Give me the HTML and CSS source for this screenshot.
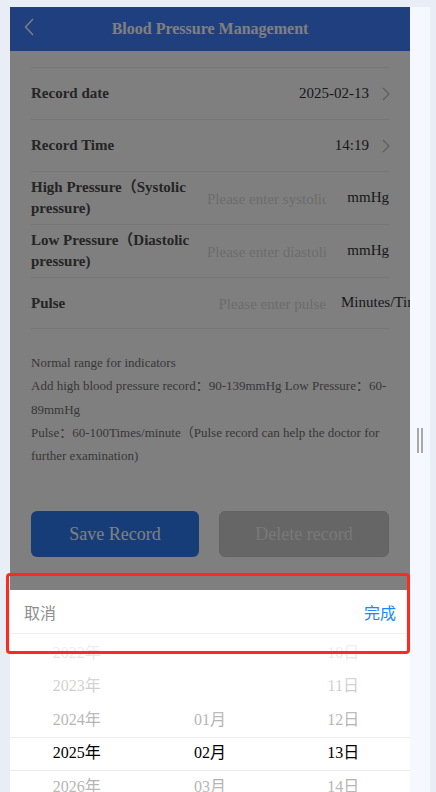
FILE: index.html
```html
<!DOCTYPE html>
<html lang="en">
<head>
<meta charset="utf-8">
<title>Blood Pressure Management</title>
<link rel="stylesheet" href="styles.css">
</head>
<body>
<div class="stage">
  <div class="phone">
    <header class="nav">
      <svg class="back" width="10" height="18" viewBox="0 0 10 18"><path d="M9 1 L1.5 9 L9 17" fill="none" stroke="#fff" stroke-width="1.4"/></svg>
      <h1 class="title">Blood Pressure Management</h1>
    </header>
    <main class="content">
      <div class="list">
        <div class="row">
          <div class="label">Record date</div>
          <div class="value">2025-02-13</div>
          <svg class="chev" width="8" height="14" viewBox="0 0 8 14"><path d="M1 1 L7 7 L1 13" fill="none" stroke="#bbb" stroke-width="1.2"/></svg>
        </div>
        <div class="row">
          <div class="label">Record Time</div>
          <div class="value">14:19</div>
          <svg class="chev" width="8" height="14" viewBox="0 0 8 14"><path d="M1 1 L7 7 L1 13" fill="none" stroke="#bbb" stroke-width="1.2"/></svg>
        </div>
        <div class="row">
          <div class="label">High Pressure（Systolic pressure)</div>
          <div class="input">Please enter systolic</div>
          <div class="unit">mmHg</div>
        </div>
        <div class="row">
          <div class="label">Low Pressure（Diastolic pressure)</div>
          <div class="input">Please enter diastolic</div>
          <div class="unit">mmHg</div>
        </div>
        <div class="row">
          <div class="label">Pulse</div>
          <div class="input">Please enter pulse</div>
          <div class="unit">Minutes/Times</div>
        </div>
      </div>
      <div class="notes">
        <p>Normal range for indicators</p>
        <p>Add high blood pressure record：90-139mmHg Low Pressure：60-89mmHg</p>
        <p>Pulse：60-100Times/minute（Pulse record can help the doctor for further examination)</p>
      </div>
      <div class="actions">
        <button class="btn save">Save Record</button>
        <button class="btn del">Delete record</button>
      </div>
    </main>
    <div class="mask"></div>
    <div class="picker">
      <div class="toolbar">
        <span class="cancel">取消</span>
        <span class="confirm">完成</span>
      </div>
      <div class="wheel">
        <div class="col">
          <div class="item">2022年</div>
          <div class="item">2023年</div>
          <div class="item">2024年</div>
          <div class="item sel">2025年</div>
          <div class="item">2026年</div>
          <div class="item">2027年</div>
          <div class="item">2028年</div>
        </div>
        <div class="col">
          <div class="item"></div>
          <div class="item"></div>
          <div class="item">01月</div>
          <div class="item sel">02月</div>
          <div class="item">03月</div>
          <div class="item">04月</div>
          <div class="item">05月</div>
        </div>
        <div class="col">
          <div class="item">10日</div>
          <div class="item">11日</div>
          <div class="item">12日</div>
          <div class="item sel">13日</div>
          <div class="item">14日</div>
          <div class="item">15日</div>
          <div class="item">16日</div>
        </div>
        <div class="fade fade-top"></div>
        <div class="band"></div>
        <div class="fade fade-bottom"></div>
      </div>
    </div>
  </div>
  <div class="side"><div class="handle"></div></div>
  <div class="annot"></div>
</div>
</body>
</html>
```
FILE: styles.css
```css
* { box-sizing: border-box; }
html, body { margin: 0; padding: 0; }
body {
  background: #e9eef6;
  font-family: "Liberation Serif", "Noto Sans CJK SC", serif;
  overflow: hidden;
}
.stage {
  position: relative;
  display: flex;
  padding: 7px 0 0 10px;
  height: 792px;
}
.phone {
  position: relative;
  width: 400px;
  height: 785px;
  overflow: hidden;
  background: #fff;
}
.side {
  width: 20px;
  height: 785px;
  background: #f5f8fe;
  padding-top: 421px;
  display: flex;
  justify-content: center;
}
.handle {
  width: 6px;
  height: 25px;
  border-left: 2px solid #a9a9a9;
  border-right: 2px solid #a9a9a9;
}
.nav {
  height: 44px;
  background: #3e7efc;
  display: flex;
  align-items: center;
  justify-content: center;
  position: relative;
}
.back {
  position: absolute;
  left: 14px;
  top: 11px;
}
.title {
  margin: 0;
  color: #fff;
  font-size: 16px;
  font-weight: bold;
}
.content {
  padding: 16px 21px 0;
}
.list .row {
  display: flex;
  align-items: center;
  min-height: 52px;
  padding: 5px 0;
  border-top: 1px solid #ececec;
}
.list .row:last-child { border-bottom: 1px solid #ececec; }
.label {
  flex: 1;
  min-width: 0;
  padding-right: 10px;
  font-size: 15px;
  font-weight: bold;
  line-height: 21px;
  color: #4a4a4a;
}
.value {
  font-size: 15px;
  color: #333;
}
.chev { margin-left: 13px; margin-right: -1px; }
.input {
  width: 119px;
  overflow: hidden;
  white-space: nowrap;
  text-align: right;
  font-size: 15px;
  color: #d8d8d8;
  margin-top: 2px;
}
.unit {
  width: 48px;
  margin-left: 15px;
  white-space: nowrap;
  text-align: right;
  font-size: 15px;
  color: #333;
  margin-top: -2px;
}
.notes {
  margin-top: 22px;
  font-size: 13px;
  line-height: 23.3px;
  color: #707070;
}
.notes p { margin: 0; }
.actions {
  display: flex;
  gap: 20px;
  margin-top: 44px;
}
.btn {
  flex: 1;
  height: 46px;
  border: none;
  border-radius: 6px;
  font-family: "Liberation Serif", serif;
  font-size: 18px;
}
.save { background: #2e7af0; color: #fff; }
.del { background: #cdcdcd; color: #f0f0f0; border: 1px solid #c4c4c4; }
.mask {
  position: absolute;
  inset: 0;
  background: rgba(0, 0, 0, 0.5);
}
.picker {
  position: absolute;
  left: 0;
  right: 0;
  top: 583px;
  background: #fff;
}
.toolbar {
  height: 44px;
  display: flex;
  align-items: center;
  justify-content: space-between;
  padding: 0 14px;
  border-bottom: 1px solid #f0f0f0;
  font-family: "Noto Sans CJK SC", sans-serif;
  font-size: 16px;
}
.cancel { color: #8e8e8e; }
.confirm { color: #1989fa; }
.wheel {
  position: relative;
  display: flex;
}
.col { flex: 1; }
.item {
  height: 33.5px;
  display: flex;
  align-items: center;
  justify-content: center;
  font-size: 16px;
  color: #aaa;
}
.item.sel { color: #000; }
.fade {
  position: absolute;
  left: 0;
  right: 0;
  height: 103px;
}
.fade-top {
  top: 0;
  background: linear-gradient(180deg, rgba(255,255,255,0.92), rgba(255,255,255,0));
}
.fade-bottom {
  top: 136px;
  background: linear-gradient(0deg, rgba(255,255,255,0.92), rgba(255,255,255,0));
}
.band {
  position: absolute;
  left: 0;
  right: 0;
  top: 103px;
  height: 34px;
  border-top: 1px solid #ebedf0;
  border-bottom: 1px solid #ebedf0;
}
.annot {
  position: absolute;
  left: 6px;
  top: 573px;
  width: 404px;
  height: 81px;
  border: 3px solid #ff2a1e;
  border-radius: 4px;
}
```
